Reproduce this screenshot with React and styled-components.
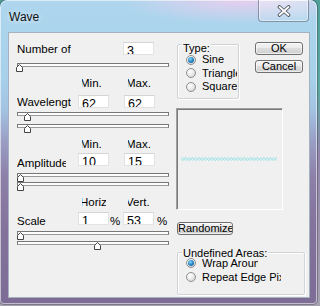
import React from 'react';
import styled, { createGlobalStyle } from 'styled-components';

const GlobalStyle = createGlobalStyle`
  html, body { margin: 0; padding: 0; }
  body {
    width: 320px;
    height: 306px;
    overflow: hidden;
    background: linear-gradient(180deg, #4f9f9a 0%, #5ea6a2 30%, #8f84a8 50%, #9d93ab 75%, #a7a2b0 100%);
    font-family: "Liberation Sans", Arial, sans-serif;
  }
`;

const Window = styled.div`
  box-sizing: border-box;
  width: 317px;
  height: 304px;
  padding: 0 7px 6px 8px;
  display: flex;
  flex-direction: column;
  border-radius: 7px 7px 4px 4px;
  background:
    radial-gradient(ellipse 120px 24px at 240px 0px, rgba(236, 206, 238, 0.9), rgba(236, 206, 238, 0) 100%),
    linear-gradient(180deg, #aed6ee 0%, #a7d1eb 25%, #a3c3e2 36%, #9b9fc6 46%, #8c80a9 58%, #83729c 75%, #7d6c96 100%);
  box-shadow: inset 0 0 0 1px rgba(255, 255, 255, 0.55), 0 0 0 1px rgba(40, 50, 70, 0.35);
`;

const TitleBar = styled.div`
  height: 32px;
  flex-shrink: 0;
  display: flex;
  align-items: flex-start;
`;

const Title = styled.div`
  margin: 10px 0 0 1px;
  font-size: 12px;
  line-height: 14px;
  color: #111;
  text-shadow: 0 0 5px rgba(255, 255, 255, 0.9);
`;

const CloseButton = styled.div`
  box-sizing: border-box;
  margin-left: auto;
  margin-right: 1px;
  width: 51px;
  height: 22px;
  border: 1px solid rgba(60, 70, 95, 0.5);
  border-top: none;
  border-radius: 0 0 4px 4px;
  background: linear-gradient(180deg, rgba(255, 255, 255, 0.35), rgba(255, 255, 255, 0.12));
  box-shadow: inset 0 0 0 1px rgba(255, 255, 255, 0.45);
  display: flex;
  align-items: center;
  justify-content: center;
`;

const Client = styled.div`
  flex: 1;
  box-sizing: border-box;
  display: flex;
  gap: 7px;
  background: #f0f0f0;
  border: 1px solid #a4b2c0;
  padding: 9px 0 0 8px;
  color: #000;
`;

const LeftCol = styled.div`
  width: 152px;
  flex-shrink: 0;
  display: flex;
  flex-direction: column;
`;

const FieldRow = styled.div`
  display: flex;
  align-items: flex-start;
  height: 13px;
  flex-shrink: 0;
  margin-top: ${p => p.$mt || 0}px;
`;

const FieldLabel = styled.div`
  width: ${p => p.$w}px;
  margin-right: ${p => p.$mr || 0}px;
  padding-top: ${p => p.$dy || 0}px;
  flex-shrink: 0;
  overflow: hidden;
  white-space: nowrap;
  font-size: 11.5px;
  line-height: 13px;
`;

const NumBox = styled.div`
  box-sizing: border-box;
  width: 31px;
  height: 13px;
  flex-shrink: 0;
  margin-left: ${p => p.$ml || 0}px;
  background: #fff;
  border: 1px solid #e2e2e2;
  border-top-color: #d4d4d4;
  padding: 1.5px 0 0 3px;
  overflow: hidden;
  font-size: 12.5px;
  line-height: 13px;
`;

const Percent = styled.div`
  box-sizing: border-box;
  width: ${p => p.$w}px;
  padding: 3px 0 0 ${p => p.$pl}px;
  flex-shrink: 0;
  font-size: 11.5px;
  line-height: 13px;
`;

const HeadRow = styled.div`
  display: flex;
  height: 13px;
  flex-shrink: 0;
  margin-top: ${p => p.$mt}px;
  padding-left: 65px;
  gap: 22px;
`;

const Heading = styled.div`
  width: 24px;
  overflow: hidden;
  white-space: nowrap;
  font-size: 11.5px;
  line-height: 13px;
  & > span {
    display: inline-block;
    margin-left: ${p => p.$shift}px;
  }
`;

const SliderWrap = styled.div`
  position: relative;
  width: 152px;
  height: 9px;
  flex-shrink: 0;
  margin-top: ${p => p.$mt}px;
`;

const Track = styled.div`
  box-sizing: border-box;
  height: 4px;
  border: 1px solid #777;
  border-bottom-color: #9a9a9a;
  background: #fdfdfd;
`;

const Thumb = styled.svg`
  position: absolute;
  top: 1px;
  left: ${p => p.$x}px;
`;

const RightCol = styled.div`
  width: 134px;
  display: flex;
  flex-direction: column;
`;

const TopRight = styled.div`
  display: flex;
  align-items: flex-start;
`;

const GroupBox = styled.div`
  box-sizing: border-box;
  width: ${p => p.$w}px;
  height: ${p => p.$h}px;
  margin: ${p => p.$mt}px 0 0 1px;
  border: 1px solid #d0d4d8;
  border-radius: 2px;
  box-shadow: inset 1px 1px 0 #fff, 1px 1px 0 #fff;
  display: flex;
  flex-direction: column;
`;

const GroupLegend = styled.div`
  align-self: flex-start;
  height: 13px;
  margin: ${p => p.$mt}px 0 0 4px;
  padding: 0 1px;
  background: #f0f0f0;
  font-size: 11px;
  line-height: 13px;
  white-space: nowrap;
`;

const RadioList = styled.div`
  display: flex;
  flex-direction: column;
  margin-top: ${p => p.$mt}px;
`;

const RadioRow = styled.div`
  display: flex;
  align-items: center;
  height: ${p => p.$h}px;
  padding-left: 8px;
`;

const RadioDot = styled.span`
  box-sizing: border-box;
  width: 10px;
  height: 10px;
  flex-shrink: 0;
  border-radius: 50%;
  border: 1px solid #8f8f8f;
  background: radial-gradient(circle at 35% 30%, #ffffff 0%, #ececec 45%, #c9c9c9 100%);
  display: flex;
  align-items: center;
  justify-content: center;
  &::after {
    content: '';
    display: ${p => (p.$on ? 'block' : 'none')};
    width: 6px;
    height: 6px;
    border-radius: 50%;
    background: radial-gradient(circle at 40% 35%, #8fd8f8 0%, #2a8ccc 45%, #0d4f86 100%);
  }
`;

const RadioText = styled.span`
  margin-left: 6px;
  width: ${p => p.$clip}px;
  overflow: hidden;
  white-space: nowrap;
  font-size: 11px;
  line-height: 13px;
`;

const ButtonCol = styled.div`
  display: flex;
  flex-direction: column;
  gap: 5px;
  margin-left: 16px;
`;

const PushButton = styled.div`
  box-sizing: border-box;
  width: ${p => p.$w}px;
  height: 13px;
  margin: ${p => p.$mt || 0}px 0 0 ${p => p.$ml || 0}px;
  border: 1px solid #707070;
  border-radius: 3px;
  background: linear-gradient(180deg, #f3f3f3 0%, #ececec 45%, #dddddd 50%, #cfcfcf 100%);
  box-shadow: inset 0 0 0 1px rgba(255, 255, 255, 0.6);
  font-size: 11px;
  line-height: 11px;
  text-align: center;
  white-space: nowrap;
  overflow: hidden;
`;

const Preview = styled.div`
  box-sizing: border-box;
  width: 107px;
  height: 102px;
  margin-top: 9px;
  border: 1px solid;
  border-color: #a0a0a0 #ffffff #ffffff #a0a0a0;
  box-shadow: inset 1px 1px 0 #7a7a7a;
  background: #f0f0f0;
  display: flex;
  align-items: center;
  justify-content: center;
`;

const wave = (() => {
  let a = '';
  let b = '';
  for (let x = 0; x <= 96; x += 0.5) {
    const s = 1.4 * Math.sin((x * 2 * Math.PI) / 6.5);
    a += `${x === 0 ? 'M' : 'L'}${x.toFixed(1)} ${(3 + s).toFixed(2)} `;
    b += `${x === 0 ? 'M' : 'L'}${x.toFixed(1)} ${(3 - s).toFixed(2)} `;
  }
  return [a, b];
})();

const ThumbIcon = ({ x }) => (
  <Thumb $x={x} width="7" height="8" viewBox="0 0 7 8">
    <path d="M0.5 7.5 V3.5 L3.5 0.5 L6.5 3.5 V7.5 Z" fill="#fff" stroke="#444" strokeWidth="1" />
  </Thumb>
);

const Slider = ({ mt, x }) => (
  <SliderWrap $mt={mt}>
    <Track />
    <ThumbIcon x={x} />
  </SliderWrap>
);

const Headings = ({ mt, a, b }) => (
  <HeadRow $mt={mt}>
    <Heading $shift={-2}><span>{a}</span></Heading>
    <Heading $shift={-2}><span>{b}</span></Heading>
  </HeadRow>
);

const Radio = ({ on, label, clip, h }) => (
  <RadioRow $h={h}>
    <RadioDot $on={on} />
    <RadioText $clip={clip}>{label}</RadioText>
  </RadioRow>
);

export default function App() {
  return (
    <>
      <GlobalStyle />
      <Window>
        <TitleBar>
          <Title>Wave</Title>
          <CloseButton>
            <svg width="14" height="12" viewBox="0 0 14 12">
              <path d="M2.5 2 L11.5 10 M11.5 2 L2.5 10" stroke="#4a4f58" strokeWidth="3.6" strokeLinecap="round" />
              <path d="M2.5 2 L11.5 10 M11.5 2 L2.5 10" stroke="#ffffff" strokeWidth="1.8" strokeLinecap="round" />
            </svg>
          </CloseButton>
        </TitleBar>
        <Client>
          <LeftCol>
            <FieldRow>
              <FieldLabel $w={56} $mr={50} $dy={1}>Number of</FieldLabel>
              <NumBox>3</NumBox>
            </FieldRow>
            <Slider mt={8} x={-1} />
            <Headings mt={5} a="Min." b="Max." />
            <FieldRow $mt={5}>
              <FieldLabel $w={54} $mr={7} $dy={1}>Wavelength</FieldLabel>
              <NumBox>62</NumBox>
              <NumBox $ml={15}>62</NumBox>
            </FieldRow>
            <Slider mt={4} x={7} />
            <Slider mt={3} x={7} />
            <Headings mt={5} a="Min." b="Max." />
            <FieldRow $mt={2}>
              <FieldLabel $w={49} $mr={12} $dy={4}>Amplitude</FieldLabel>
              <NumBox>10</NumBox>
              <NumBox $ml={15}>15</NumBox>
            </FieldRow>
            <Slider mt={7} x={0} />
            <Slider mt={0} x={0} />
            <Headings mt={5} a="Horiz" b="Vert." />
            <FieldRow $mt={3}>
              <FieldLabel $w={61} $dy={3}>Scale</FieldLabel>
              <NumBox>1</NumBox>
              <Percent $w={14} $pl={1}>%</Percent>
              <NumBox>53</NumBox>
              <Percent $w={14} $pl={3}>%</Percent>
            </FieldRow>
            <Slider mt={6} x={0} />
            <Slider mt={1} x={77} />
          </LeftCol>
          <RightCol>
            <TopRight>
              <GroupBox $w={62} $h={55} $mt={2}>
                <GroupLegend $mt={-3}>Type:</GroupLegend>
                <RadioList $mt={-2}>
                  <Radio on label="Sine" clip={35} h={13.5} />
                  <Radio label="Triangle" clip={35} h={13.5} />
                  <Radio label="Square" clip={35} h={13.5} />
                </RadioList>
              </GroupBox>
              <ButtonCol>
                <PushButton $w={48}>OK</PushButton>
                <PushButton $w={48}>Cancel</PushButton>
              </ButtonCol>
            </TopRight>
            <Preview>
              <svg width="97" height="6" viewBox="0 0 97 6">
                <path d={wave[0]} fill="none" stroke="#86dcdf" strokeWidth="0.9" />
                <path d={wave[1]} fill="none" stroke="#9fe6e8" strokeWidth="0.9" />
              </svg>
            </Preview>
            <PushButton $w={56} $mt={12} $ml={1}>Randomize</PushButton>
            <GroupBox $w={128} $h={43} $mt={17}>
              <GroupLegend $mt={-6}>Undefined Areas:</GroupLegend>
              <RadioList $mt={-4}>
                <Radio on label="Wrap Around" clip={56} h={14} />
                <Radio label="Repeat Edge Pixels" clip={78.5} h={14} />
              </RadioList>
            </GroupBox>
          </RightCol>
        </Client>
      </Window>
    </>
  );
}
